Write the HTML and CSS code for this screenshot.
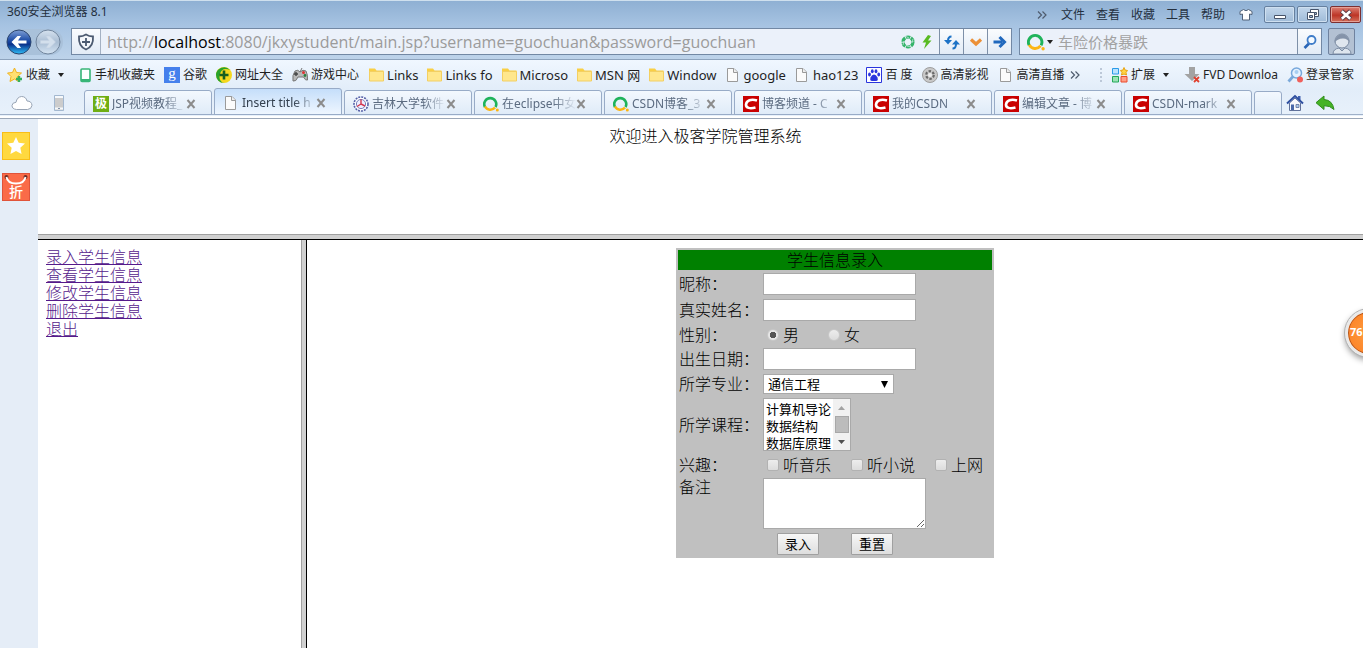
FILE: index.html
```html
<!DOCTYPE html>
<html lang="zh-CN">
<head>
<meta charset="utf-8">
<title>Insert title here</title>
<link rel="stylesheet" href="styles.css">
</head>
<body>
<svg class="defs" aria-hidden="true">
  <defs>
    <linearGradient id="blue" x1="0" y1="0" x2="0" y2="1"><stop offset="0" stop-color="#7f9fd6"/><stop offset=".45" stop-color="#1c4ba6"/><stop offset=".6" stop-color="#0b338c"/><stop offset="1" stop-color="#2fc0fa"/></linearGradient>
    <linearGradient id="pale" x1="0" y1="0" x2="0" y2="1"><stop offset="0" stop-color="#d6e2ef"/><stop offset=".5" stop-color="#a9bdd3"/><stop offset="1" stop-color="#d5e4f3"/></linearGradient>
    <symbol id="folder" viewBox="0 0 16 16"><path d="M1 1.500h6l1.500 2H15.500v10H1z" fill="#f9cf45"/><path d="M1.500 4.500h14v9.500h-14z" fill="#ffe78d" stroke="#f3cf62"/></symbol>
    <symbol id="page" viewBox="0 0 16 16"><path d="M2.500 1.500h6.500L12.500 5v9.500h-10z" fill="#fbfbfb" stroke="#9a9a9a"/><path d="M8.500 1.500v4h4" fill="#eee" stroke="#9a9a9a"/></symbol>
    <symbol id="csdn" viewBox="0 0 16 16"><path d="M0 0h16v16H0z" fill="#c90000"/><path d="M14 4.500C8 2.500 3.500 4.500 3 8.500c-.2 3.500 4 4.500 9.500 3" fill="none" stroke="#fff" stroke-width="2.600"/></symbol>
    <symbol id="ring" viewBox="0 0 16 16"><path d="M2 11A6 6 0 1 1 12.500 11" fill="none" stroke="#1fb35b" stroke-width="2.600"/><path d="M2 10.500a6 6 0 0 0 10 1" fill="none" stroke="#fcb514" stroke-width="2.600"/><circle cx="14.300" cy="14" r="1.500" fill="#fcb514"/></symbol>
    <symbol id="cross" viewBox="0 0 10 10"><path d="M1.500 1l7 8M8.500 1l-7 8" stroke="#8c8c8c" stroke-width="2"/></symbol>
    <symbol id="chev" viewBox="0 0 10 10"><path d="M1 1.500l3.500 3.500L1 8.500M5.500 1.500L9 5 5.500 8.500" fill="none" stroke="#4f5c6e" stroke-width="1.200"/></symbol>
    <symbol id="down" viewBox="0 0 6 4"><path d="M0 0h6L3 4z" fill="#222"/></symbol>
  </defs>
</svg>

<header class="chrome">
  <div class="upper">
    <div class="titlebar">
      <span class="app-name">360安全浏览器 8.1</span>
      <nav class="menu" aria-label="菜单">
        <svg class="i10"><use href="#chev"/></svg>
        <a href="#">文件</a><a href="#">查看</a><a href="#">收藏</a><a href="#">工具</a><a href="#">帮助</a>
        <button class="bare" aria-label="皮肤"><svg class="i14" viewBox="0 0 14 14"><path d="M4.500 1.500L1 3.500v3l2.500-.5V12h7V6l2.500.5v-3l-3.500-2Q7 4 4.500 1.500z" fill="#fff" stroke="#526379"/></svg></button>
      </nav>
      <div class="win">
        <button class="winbtn" aria-label="最小化"><svg class="i14" viewBox="0 0 14 14"><path d="M1.500 7.500h11v3h-11z" fill="#fff" stroke="#47546a"/></svg></button>
        <button class="winbtn" aria-label="还原"><svg class="i14" viewBox="0 0 14 14"><path d="M4.500 1.500h8v7h-8z" fill="#fff" stroke="#47546a"/><path d="M7.500 4.500h3v2h-3z" fill="#9cb5d0" stroke="#47546a"/><path d="M1.500 4.500h7v7h-7z" fill="#fff" stroke="#47546a"/><path d="M3.500 7.500h3v2h-3z" fill="#9cb5d0" stroke="#47546a"/></svg></button>
        <button class="winbtn close" aria-label="关闭"><svg class="i14" viewBox="0 0 14 14"><path d="M2.500 3l9 8M11.500 3l-9 8" stroke="#5b3b46" stroke-width="4.500"/><path d="M2.800 3.300l8.400 7.400M11.200 3.300l-8.400 7.400" stroke="#fff" stroke-width="2.600"/></svg></button>
      </div>
    </div>

    <div class="address-row">
      <div class="history">
        <button class="bare" aria-label="后退"><svg class="i26" viewBox="0 0 26 26"><circle cx="13" cy="13" r="12" fill="url(#blue)" stroke="#2c456f"/><path d="M20.500 11.500H12l3-4.500h-3.500L5.500 13l6 6H15l-3-4.500h8.500z" fill="#fff"/></svg></button>
        <button class="bare" aria-label="前进"><svg class="i26" viewBox="0 0 26 26"><circle cx="13" cy="13" r="12" fill="url(#pale)" stroke="#71859d"/><path d="M5.500 11.500H14l-3-4.500h3.500l6 6-6 6H11l3-4.500H5.500z" fill="#d3dfec" stroke="#c4d2e2" stroke-width=".6"/></svg></button>
      </div>
      <div class="box address">
        <span class="cell shield"><svg class="i18" viewBox="0 0 18 18"><path d="M9 1.500Q12 3.500 16 3.500C16.500 10 14 14.500 9 16.500 4 14.500 1.500 10 2 3.500 6 3.500 9 1.500 9 1.500z" fill="#f4f7fb" stroke="#4c5a70" stroke-width="1.800"/><path d="M9 5v8M5 9h8" stroke="#4c5a70" stroke-width="1.800"/></svg></span>
        <div class="url" role="textbox" aria-label="地址">http://<b>localhost</b>:8080/jkxystudent/main.jsp?username=guochuan&amp;password=guochuan</div>
        <span class="marks">
          <svg class="i14" viewBox="0 0 14 14"><circle cx="7" cy="7" r="5" fill="none" stroke="#35b46a" stroke-width="3.200" stroke-dasharray="4.400 .8"/><path d="M4 1l4 2M12 4l-1 4M10 12l-4-1M2 10l1-4" stroke="#eef4fb" stroke-width=".6"/></svg>
          <svg class="i14" viewBox="0 0 14 14"><path d="M8 0L2.500 7.500H6L4 14l7.500-8.500H8L11 1z" fill="#58ba22"/></svg>
        </span>
        <button class="cell" aria-label="刷新"><svg class="i16" viewBox="0 0 16 16"><path d="M7.500 2.500Q4 2.500 4 7" fill="none" stroke="#1c72c6" stroke-width="2"/><path d="M0 6h8l-4 4.500z" fill="#1c72c6"/><path d="M8.500 14.500q3.500 0 3.500-4.500" fill="none" stroke="#1c72c6" stroke-width="2"/><path d="M8 10.500h8L12 6z" fill="#1c72c6"/></svg></button>
        <button class="cell" aria-label="展开"><svg class="i14" viewBox="0 0 14 14"><path d="M2 4.500l5 4.500 5-4.500" fill="none" stroke="#ec9037" stroke-width="3.200"/></svg></button>
        <button class="cell" aria-label="转到"><svg class="i14" viewBox="0 0 14 14"><path d="M0.500 7H9M6.500 2l5 5-5 5" fill="none" stroke="#2068bd" stroke-width="3"/></svg></button>
      </div>
      <div class="box search">
        <svg class="i18"><use href="#ring"/></svg>
        <svg class="caret small"><use href="#down"/></svg>
        <input type="text" class="query" aria-label="搜索" placeholder="车险价格暴跌">
        <button class="cell" aria-label="搜索"><svg class="i16" viewBox="0 0 16 16"><path d="M7 9.500L2.500 14" stroke="#2a66b7" stroke-width="2.600"/><circle cx="9.500" cy="6" r="4" fill="#f4faff" stroke="#3e7cc8" stroke-width="1.800"/></svg></button>
      </div>
      <button class="avatar" aria-label="用户"><svg class="i22" viewBox="0 0 22 22"><path d="M2 22q0-5 6-6l3 3 3-3q6 1 6 6z" fill="#dde5ee" stroke="#7b8ba2"/><circle cx="11" cy="9" r="7" fill="#dfe6ee" stroke="#7b8ba2"/><path d="M3.500 11a7.500 9 0 0 1 15 0Q17 6.500 12 6.500 6 6.500 3.500 11z" fill="#8493a9"/></svg></button>
    </div>
  </div>

  <nav class="bookmarks" aria-label="收藏夹">
    <a href="#"><svg class="i16" viewBox="0 0 16 16"><path d="M7.500 1l2 4.500 5 .5-4 3.500 1 5-4-2.500-4.500 2.500 1-5-3.500-3.500 5-.5z" fill="#ffe071" stroke="#f0b321"/><path d="M12 9v6M9 12h6" stroke="#35b05c" stroke-width="2.400"/></svg>收藏<svg class="caret fav"><use href="#down"/></svg></a>
    <a href="#"><svg class="i13" viewBox="0 0 13 16"><rect x="2" y="2" width="9" height="12.500" rx="1" fill="#fff" stroke="#37b577" stroke-width="1.600"/><path d="M2 12h9v2H2z" fill="#37b577"/></svg>手机收藏夹</a>
    <a href="#"><span class="sq google">g</span>谷歌</a>
    <a href="#"><svg class="i16" viewBox="0 0 16 16"><circle cx="8" cy="8" r="8" fill="#f5d81e"/><path d="M0 8a8 8 0 0 1 14-5Q6 0 4 7t4 9A8 8 0 0 1 0 8z" fill="#29a32c"/><path d="M8 3.500v9M3.500 8h9" stroke="#155f20" stroke-width="2.600"/></svg>网址大全</a>
    <a href="#"><svg class="i16" viewBox="0 0 16 16"><path d="M1 14Q0 8 3 4q3-2 5 1 3-3 6-1 2 4 1.500 9-2 1-4-3H6q-2 5-5 4z" fill="#b8b8b8" stroke="#777"/><path d="M4 5v4M2 7h4" stroke="#444" stroke-width="1.400"/><circle cx="11.500" cy="5.500" r="1.500" fill="#d33"/><circle cx="13" cy="8.500" r="1.400" fill="#2a7d3d"/><path d="M8 5l2-4" stroke="#777"/></svg>游戏中心</a>
    <a href="#" class="latin"><svg class="i16"><use href="#folder"/></svg>Links</a>
    <a href="#" class="latin"><svg class="i16"><use href="#folder"/></svg>Links fo</a>
    <a href="#" class="latin"><svg class="i16"><use href="#folder"/></svg>Microso</a>
    <a href="#" class="latin"><svg class="i16"><use href="#folder"/></svg>MSN 网</a>
    <a href="#" class="latin"><svg class="i16"><use href="#folder"/></svg>Window</a>
    <a href="#" class="latin"><svg class="i16"><use href="#page"/></svg>google</a>
    <a href="#" class="latin"><svg class="i16"><use href="#page"/></svg>hao123</a>
    <a href="#"><svg class="i16" viewBox="0 0 16 16"><path d="M.5.5h15v15H.5z" fill="#fff" stroke="#2a35dd"/><ellipse cx="3.500" cy="7.500" rx="1.400" ry="1.900" fill="#2a35dd"/><ellipse cx="6.300" cy="4.300" rx="1.400" ry="2" fill="#2a35dd"/><ellipse cx="10" cy="4.300" rx="1.400" ry="2" fill="#2a35dd"/><ellipse cx="12.700" cy="7.500" rx="1.400" ry="1.900" fill="#2a35dd"/><path d="M8 7.500q2 0 3.500 3 1 3.500-1.500 3.500H6q-2.500 0-1.500-3.500Q6 7.500 8 7.500z" fill="#2a35dd"/></svg>百 度</a>
    <a href="#"><svg class="i16" viewBox="0 0 16 16"><circle cx="8" cy="8" r="7.500" fill="#c9c9c9" stroke="#9d9d9d"/><circle cx="8" cy="8" r="3.800" fill="none" stroke="#6a6a6a" stroke-width="2.200" stroke-dasharray="2.500 1.500"/><circle cx="8" cy="8" r="2" fill="#eee"/></svg>高清影视</a>
    <a href="#"><svg class="i16"><use href="#page"/></svg>高清直播</a>
    <svg class="i10 more"><use href="#chev"/></svg>
    <span class="plugins">
      <svg class="grip" viewBox="0 0 3 16"><path d="M0 1h2v2H0zM0 5h2v2H0zM0 9h2v2H0zM0 13h2v2H0z" fill="#bcc8d8"/></svg>
      <a href="#"><svg class="i16" viewBox="0 0 16 16"><path d="M.5 1.500h6V7h-6z" fill="#b9e2ff" stroke="#2b9be8"/><path d="M.5 9.500h6V15h-6z" fill="#9be2b5" stroke="#23a858"/><path d="M9 9.500h6V15H9z" fill="#ff9e85" stroke="#ea4a2d"/><path d="M12 .5l1 2.500 2.500.5-1.500 2 .5 2.500-2.500-1-2.500 1 .5-2.500-1.500-2 2.500-.5z" fill="#ffd445" stroke="#e8a410"/></svg>扩展<svg class="caret fav"><use href="#down"/></svg></a>
      <a href="#"><svg class="i16" viewBox="0 0 16 16"><path d="M5 0h6v7h4.500L8 14 .5 7H5z" fill="#a3a3a3"/><path d="M10 10l5 5M15 10l-5 5" stroke="#e0402e" stroke-width="1.800"/></svg>FVD Downloa</a>
      <a href="#"><svg class="i16" viewBox="0 0 16 16"><path d="M6.500 9L1.500 14.500" stroke="#7ba9da" stroke-width="2.800"/><circle cx="9.500" cy="6" r="5" fill="#e5f2ff" stroke="#77a8dc" stroke-width="1.500"/><circle cx="9.500" cy="5" r="2" fill="#a8cff2"/><circle cx="13" cy="12.500" r="3" fill="#f0605c"/></svg>登录管家</a>
    </span>
  </nav>

  <div class="tabs">
    <svg class="cloud" viewBox="0 0 22 16"><path d="M5.500 14.500Q1 14 1 10.500q.3-3 4-3.200Q6 2 10.500 1.500q4.500 0 5.500 4.500 4.500 0 5 4.300-.5 4-4.500 4.200z" fill="#fff" stroke="#98a4b5"/></svg>
    <svg class="device" viewBox="0 0 10 16"><path d="M.5.5h9v15h-9z" fill="#ccc" stroke="#a3b8d0"/><path d="M1 2h8M1 13.500h8" stroke="#f6f9fc" stroke-width="2"/><path d="M4 13.500h2" stroke="#8494aa"/></svg>
    <div class="tab"><span class="sq ji">极</span><span class="name">JSP视频教程_</span><button class="bare" aria-label="关闭标签"><svg class="i10"><use href="#cross"/></svg></button></div>
    <div class="tab active"><svg class="i16"><use href="#page"/></svg><span class="name">Insert title h</span><button class="bare" aria-label="关闭标签"><svg class="i10"><use href="#cross"/></svg></button></div>
    <div class="tab"><svg class="i16" viewBox="0 0 16 16"><circle cx="8" cy="8" r="7" fill="#fff" stroke="#5560a8" stroke-width="1.600" stroke-dasharray="2 1"/><circle cx="8" cy="8" r="4.600" fill="#eef" stroke="#7780bb"/><path d="M8 3.500V8l4 2M8 8l-4 2.500" fill="none" stroke="#d3384f" stroke-width="1.400"/></svg><span class="name">吉林大学软件</span><button class="bare" aria-label="关闭标签"><svg class="i10"><use href="#cross"/></svg></button></div>
    <div class="tab"><svg class="i16"><use href="#ring"/></svg><span class="name">在eclipse中女</span><button class="bare" aria-label="关闭标签"><svg class="i10"><use href="#cross"/></svg></button></div>
    <div class="tab"><svg class="i16"><use href="#ring"/></svg><span class="name">CSDN博客_3</span><button class="bare" aria-label="关闭标签"><svg class="i10"><use href="#cross"/></svg></button></div>
    <div class="tab"><svg class="i16"><use href="#csdn"/></svg><span class="name">博客频道 - C</span><button class="bare" aria-label="关闭标签"><svg class="i10"><use href="#cross"/></svg></button></div>
    <div class="tab"><svg class="i16"><use href="#csdn"/></svg><span class="name">我的CSDN</span><button class="bare" aria-label="关闭标签"><svg class="i10"><use href="#cross"/></svg></button></div>
    <div class="tab"><svg class="i16"><use href="#csdn"/></svg><span class="name">编辑文章 - 博</span><button class="bare" aria-label="关闭标签"><svg class="i10"><use href="#cross"/></svg></button></div>
    <div class="tab"><svg class="i16"><use href="#csdn"/></svg><span class="name">CSDN-mark</span><button class="bare" aria-label="关闭标签"><svg class="i10"><use href="#cross"/></svg></button></div>
    <button class="newtab" aria-label="新标签"></button>
    <button class="bare tool" aria-label="主页"><svg class="i18" viewBox="0 0 18 18"><path d="M3.500 9v7.500h11V9L9 4z" fill="#f7f9fd" stroke="#60719b"/><path d="M12 2h2.500v4H12z" fill="#4060b0"/><path d="M1 9.500L9 2l8 7.500" fill="none" stroke="#2e4fa0" stroke-width="2"/><path d="M5 10.500h3V16H5z" fill="#4a69a9"/><path d="M10 10.500h3v3h-3z" fill="#a9c8ea" stroke="#60719b" stroke-width=".8"/></svg></button>
    <button class="bare tool" aria-label="恢复标签"><svg class="i20" viewBox="0 0 20 16"><path d="M9 1v3.500q8.500.5 10 10-4-4-10-3.800V14.500L1 7.700z" fill="#45b325" stroke="#2f8c1b"/></svg></button>
  </div>
</header>

<div class="view">
  <aside class="side">
    <button class="tile star" aria-label="收藏"><svg class="i20" viewBox="0 0 20 20"><path d="M10 0l3 6.500 7 .8-5.200 4.700 1.400 7L10 15.500 3.800 19l1.400-7L0 7.300l7-.8z" fill="#fff"/></svg></button>
    <button class="tile sale"><svg class="strap" viewBox="0 0 24 10"><circle cx="2.500" cy="2" r="2" fill="#6b2c25"/><circle cx="21.500" cy="2" r="2" fill="#6b2c25"/><path d="M2.500 2q1 6.500 9.500 6.500T21.500 2" fill="none" stroke="#fff" stroke-width="1.800"/></svg>折</button>
  </aside>
  <div class="frames">
    <div class="banner">欢迎进入极客学院管理系统</div>
    <div class="split-h"></div>
    <div class="lower">
      <nav class="links" aria-label="学生管理">
        <a href="#">录入学生信息</a>
        <a href="#">查看学生信息</a>
        <a href="#">修改学生信息</a>
        <a href="#">删除学生信息</a>
        <a href="#">退出</a>
      </nav>
      <div class="split-v"></div>
      <main class="main">
        <form>
          <table class="entry">
            <tr><th colspan="2">学生信息录入</th></tr>
            <tr><td class="key"><label for="nick">昵称：</label></td><td><input class="field" id="nick" type="text"></td></tr>
            <tr><td class="key"><label for="real">真实姓名：</label></td><td><input class="field" id="real" type="text"></td></tr>
            <tr><td class="key">性别：</td><td><div class="choices far"><label><input type="radio" name="sex" checked>男</label><label><input type="radio" name="sex">女</label></div></td></tr>
            <tr><td class="key"><label for="birth">出生日期：</label></td><td><input class="field" id="birth" type="text"></td></tr>
            <tr><td class="key"><label for="major">所学专业：</label></td><td><select class="major" id="major"><option>通信工程</option></select></td></tr>
            <tr><td class="key"><label for="course">所学课程：</label></td><td>
              <div class="list">
                <select class="course" id="course" multiple size="3"><option>计算机导论</option><option>数据结构</option><option>数据库原理</option></select>
                <div class="scroll" aria-hidden="true">
                  <svg class="arrow" viewBox="0 0 7 4"><path d="M0 4h7L3.500 0z" fill="#a3a3a3"/></svg>
                  <div class="thumb"></div>
                  <svg class="arrow" viewBox="0 0 7 4"><path d="M0 0h7L3.500 4z" fill="#505050"/></svg>
                </div>
              </div></td></tr>
            <tr><td class="key">兴趣：</td><td><div class="choices"><label><input type="checkbox">听音乐</label><label><input type="checkbox">听小说</label><label><input type="checkbox">上网</label></div></td></tr>
            <tr class="top"><td class="key"><label for="note">备注</label></td><td><textarea class="note" id="note"></textarea></td></tr>
            <tr><td></td><td><div class="actions"><button type="submit" class="push">录入</button><button type="reset" class="push">重置</button></div></td></tr>
          </table>
        </form>
      </main>
    </div>
  </div>
  <div class="meter"><div class="ball">76</div></div>
</div>
</body>
</html>
```

FILE: styles.css
```css
* { box-sizing: border-box; }

body {
  margin: 0;
  height: 100vh;
  display: flex;
  flex-direction: column;
  overflow: hidden;
  background: #fff;
  color: #000;
  font: 12px/16px "Noto Sans", "Noto Sans CJK SC", sans-serif;
}

button, input, select, textarea { font: inherit; color: inherit; margin: 0; }
svg { display: block; flex: none; }
a { color: inherit; text-decoration: none; }

.defs { position: absolute; width: 0; height: 0; }
.i10 { width: 10px; height: 10px; }
.i13 { width: 13px; height: 16px; }
.i14 { width: 14px; height: 14px; }
.i16 { width: 16px; height: 16px; }
.i18 { width: 18px; height: 18px; }
.i20 { width: 20px; height: 18px; }
.i22 { width: 22px; height: 22px; }
.i26 { width: 26px; height: 26px; }
.bare { border: 0; padding: 0; background: none; }

/* Browser chrome */
.chrome { flex: none; border-bottom: 1px solid #9ba7b8; background: #f1f6fc; }

.upper {
  padding-bottom: 4px;
  border-top: 1px solid #cfe0ee;
  border-bottom: 1px solid #8da3bd;
  background: linear-gradient(#8fb0d3, #a6c3e2 24px, #bdd3ea);
}

.titlebar { display: flex; align-items: flex-start; height: 27px; padding: 3px 2px 0 7px; color: #24303e; }
.menu { display: flex; align-items: center; gap: 11px; height: 21px; margin-left: auto; }
.menu > svg { margin-right: 3px; }
.menu .bare { margin-left: 3px; }
.win { display: flex; gap: 2px; margin: 2px 0 0 11px; }
.winbtn {
  display: flex; align-items: center; justify-content: center;
  width: 31px; height: 17px; padding: 0;
  border: 1px solid #66809f; border-radius: 2px;
  background: linear-gradient(#c2d6eb, #9fbbd8);
  box-shadow: inset 0 0 0 1px #cfe0f0;
}
.winbtn.close { border-color: #7c2f31; background: linear-gradient(#dd8175, #bd3526 55%, #d3705c); box-shadow: inset 0 0 0 1px #e5a297; }

.address-row { display: flex; align-items: center; padding: 0 8px 0 6px; }
.history { display: flex; gap: 3px; padding: 0 2px 0 0; margin-right: 8px; border-radius: 13px; background: #a9c1da; }
.box { display: flex; align-items: center; height: 27px; border: 1px solid #7288a4; background: #ebf1fa; }
.address { flex: 1; min-width: 0; margin-right: 7px; }
.cell {
  display: flex; align-items: center; justify-content: center;
  width: 24px; height: 25px; padding: 0;
  border: 0; border-left: 1px solid #7e90a8;
  background: linear-gradient(#fafcfe, #e2ebf6);
}
.shield { width: 29px; border-left: 0; border-right: 1px solid #a4b1c3; }
.url { flex: 1; min-width: 0; padding-left: 6px; overflow: hidden; white-space: nowrap; font-family: "Open Sans", sans-serif; font-size: 16px; line-height: 22px; color: #9b9b9b; }
.url b { font-weight: 400; color: #000; }
.marks { display: flex; gap: 5px; padding: 0 5px; }
.search { width: 303px; margin-right: 6px; padding-left: 7px; }
.caret { width: 6px; height: 4px; }
.caret.small { margin: 0 5px 0 2px; }
.caret.fav { margin: 0 6px 0 5px; }
.query { flex: 1; min-width: 0; padding: 0; border: 0; outline: 0; background: none; font-size: 15px; line-height: 22px; }
.query::placeholder { color: #a2a2a2; }
.avatar { display: flex; align-items: flex-end; justify-content: center; width: 27px; height: 27px; padding: 0; border: 1px solid #6f829f; border-radius: 2px; background: #b3c1d3; }

.bookmarks {
  display: flex; align-items: center; gap: 9px;
  height: 29px; padding: 0 9px 0 7px;
  background: linear-gradient(#f0f7ff, #e2edf9);
  color: #1f1f1f; white-space: nowrap;
}
.bookmarks a { display: flex; align-items: center; gap: 3px; }
.bookmarks .latin { margin-right: -1px; font-size: 13px; }
.bookmarks .more { margin-left: -4px; }
.plugins { display: flex; align-items: center; gap: 9px; margin-left: auto; }
.grip { width: 3px; height: 16px; }
.sq { flex: none; width: 16px; height: 16px; text-align: center; line-height: 16px; color: #fff; }
.google { background: #4580ec; font: 15px/12px "Liberation Serif", serif; }
.ji { background: #6fae14; font-weight: 700; }

.tabs {
  display: flex; align-items: flex-end; gap: 2px;
  height: 29px; padding: 0 0 3px;
  background: linear-gradient(#fff, #fff) bottom / 100% 2px no-repeat, linear-gradient(#9fb0c8, #9fb0c8) 0 25px / 100% 1px no-repeat, linear-gradient(#e2edf9, #e8f1fb);
}
.cloud { width: 22px; height: 16px; margin: 0 19px 4px 11px; }
.device { width: 10px; height: 16px; margin: 0 18px 4px 0; }
.tab {
  display: flex; align-items: center;
  flex: 0 1 128px; min-width: 0; height: 25px; padding: 2px 15px 0 8px;
  border: 1px solid #98abc7; border-radius: 3px 3px 0 0;
  background: linear-gradient(#f3f8fe, #dfebf8);
  color: #5b6b80;
}
.tab.active { height: 27px; background: linear-gradient(#c5defa, #eef6ff); color: #34404f; }
.name { flex: 1; min-width: 0; margin-left: 3px; overflow: hidden; white-space: nowrap; mask-image: linear-gradient(90deg, #000 70%, transparent); }
.newtab { width: 28px; height: 24px; padding: 0; border: 1px solid #98abc7; border-radius: 3px 3px 0 0; background: linear-gradient(#f3f8fe, #dfebf8); }
.tool { margin: 0 0 3px 2px; }
.tool + .tool { margin-left: 9px; }

/* Page area */
.view { position: relative; flex: 1; min-height: 0; display: flex; }
.side { display: flex; flex-direction: column; gap: 13px; width: 38px; padding: 13px 2px; background: #e5edf7; }
.tile { display: flex; flex-direction: column; align-items: center; justify-content: center; width: 28px; height: 28px; padding: 0; color: #fff; }
.star { border: 1px solid #f8be17; background: #ffd93f; }
.sale { justify-content: flex-start; border: 1px solid #e0533a; background: #fa6b48; font-size: 14px; font-weight: 500; line-height: 14px; }
.strap { width: 24px; height: 10px; margin-top: 1px; }

.frames {
  flex: 1; min-width: 0; display: flex; flex-direction: column;
  font: 300 16px/18px "Noto Sans", "Noto Sans CJK SC", sans-serif;
}
.banner { height: 115px; padding: 8px 8px 8px 18px; text-align: center; }
.split-h { height: 6px; border-top: 1px solid #a0a0a0; border-bottom: 1px solid #000; background: #d0d0d0; }
.lower { flex: 1; min-height: 0; display: flex; }
.links { width: 263px; padding: 8px; display: flex; flex-direction: column; align-items: flex-start; }
.links a { color: #551a8b; text-decoration: underline; }
.split-v { width: 6px; border-left: 1px solid #a0a0a0; border-right: 1px solid #000; background: #d0d0d0; }
.main { flex: 1; padding: 8px; }

.entry { width: 318px; margin: 0 auto; border-spacing: 2px; background: #c0c0c0; }
.entry th { padding: 1px; background: #008000; font-weight: 300; }
.entry td { padding: 1px; }
.entry .key { width: 82px; white-space: nowrap; }
.top { vertical-align: top; }
.entry input, .entry select, .entry textarea, .entry .push { display: block; }
.field { width: 153px; height: 22px; padding: 1px 2px; border: 1px solid #a9a9a9; background: #fff; font-size: 13px; }
.major {
  appearance: none; width: 131px; height: 20px; padding: 0 4px;
  border: 1px solid #a9a9a9; border-radius: 0;
  background: #fff url("data:image/svg+xml,%3Csvg xmlns='http://www.w3.org/2000/svg' width='7' height='7'%3E%3Cpath d='M0 0h7L3.500 7z'/%3E%3C/svg%3E") right 5px center no-repeat;
  font-size: 13px; font-weight: 400; line-height: 16px;
}
.list { display: flex; width: 88px; height: 53px; border: 1px solid #a9a9a9; background: #fff; }
.course { flex: 1; min-width: 0; height: 51px; padding: 0; border: 0; border-radius: 0; background: #fff; overflow: hidden; font-size: 13px; font-weight: 400; }
.course option { height: 17px; min-height: 17px; padding: 0 2px; line-height: 15px; }
.scroll { display: flex; flex-direction: column; align-items: center; justify-content: space-between; width: 17px; padding: 0 1px; background: #f1f1f1; }
.arrow { width: 7px; height: 4px; margin: 7px 0 6px; }
.thumb { width: 14px; flex: 1; border: 1px solid #a8a8a8; background: #bcbcbc; }
.choices { display: flex; gap: 20px; height: 19px; padding-left: 4px; }
.choices.far { gap: 29px; }
.choices label { display: flex; align-items: center; gap: 4px; white-space: nowrap; }
.choices input { appearance: none; width: 12px; height: 12px; border: 1px solid #b2b2b2; border-radius: 2px; background: linear-gradient(#ededed, #dcdcdc); }
.choices input[type="radio"] { border-color: #c8c8c8; border-radius: 50%; }
.choices input[type="radio"]:checked { background: radial-gradient(circle, #555 0 3px, #e6e6e6 3px); }
.note { width: 163px; height: 51px; border: 1px solid #a9a9a9; background: #fff; resize: both; }
.actions { display: flex; gap: 32px; padding-left: 14px; }
.push { width: 42px; height: 22px; padding: 0; border: 1px solid #a0a0a0; border-radius: 1px; background: linear-gradient(#f7f7f7, #dedede); font-size: 13px; font-weight: 400; line-height: 18px; }

/* Floating usage meter, cut by the window edge */
.meter { position: absolute; top: 186px; right: 0; width: 28px; height: 64px; padding: 4px 0 0 10px; overflow: hidden; }
.ball {
  width: 48px; height: 48px; padding-left: 2px;
  border: 3px solid #e9e9e9; border-radius: 50%; outline: 1px solid #b3b3b3;
  background: radial-gradient(#ff9c3f, #fb7d22);
  box-shadow: inset 0 0 0 1px #b5551b, 0 3px 6px #999;
  color: #fff; font-size: 11px; font-weight: 700; line-height: 40px;
}
```
